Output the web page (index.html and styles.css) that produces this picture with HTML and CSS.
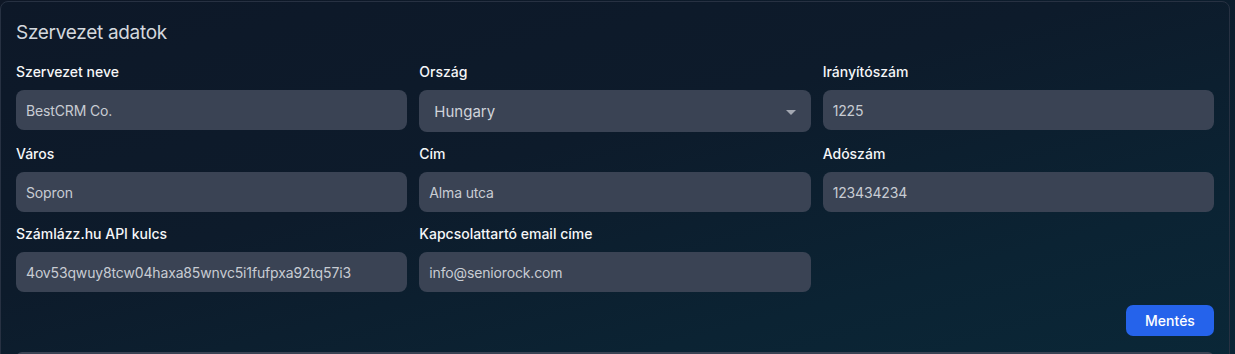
FILE: index.html
```html
<!DOCTYPE html>
<html lang="hu">
<head>
  <meta charset="UTF-8" />
  <meta name="viewport" content="width=device-width, initial-scale=1" />
  <title>Szervezet adatok</title>
  <link rel="stylesheet" href="styles.css">
</head>
<body>

  <section class="card">
    <h2 class="card-title">Szervezet adatok</h2>

    <form class="org-form" onsubmit="return false">
      <div class="field">
        <label for="orgName">Szervezet neve</label>
        <input id="orgName" type="text" value="BestCRM Co." />
      </div>
      <div class="field">
        <label for="country">Ország</label>
        <div class="select-wrap">
          <select id="country">
            <option>Hungary</option>
            <option>Austria</option>
            <option>Germany</option>
          </select>
          <svg class="caret" width="10" height="5" viewBox="0 0 10 5" aria-hidden="true">
            <path d="M0 0 H10 L5 5 Z" fill="#a3a8b2" />
          </svg>
        </div>
      </div>
      <div class="field">
        <label for="zip">Irányítószám</label>
        <input id="zip" type="text" value="1225" />
      </div>

      <div class="field">
        <label for="city">Város</label>
        <input id="city" type="text" value="Sopron" />
      </div>
      <div class="field">
        <label for="address">Cím</label>
        <input id="address" type="text" value="Alma utca" />
      </div>
      <div class="field">
        <label for="taxNo">Adószám</label>
        <input id="taxNo" type="text" value="123434234" />
      </div>

      <div class="field">
        <label for="apiKey">Számlázz.hu API kulcs</label>
        <input id="apiKey" type="text" value="4ov53qwuy8tcw04haxa85wnvc5i1fufpxa92tq57i3" />
      </div>
      <div class="field">
        <label for="email">Kapcsolattartó email címe</label>
        <input id="email" type="email" value="info@seniorock.com" />
      </div>
    </form>

    <div class="actions">
      <button type="button" class="btn-primary">Mentés</button>
    </div>

    <div class="next-block"></div>
  </section>

</body>
</html>
```

FILE: styles.css
```css
/* Reset */
* {
  box-sizing: border-box;
  margin: 0;
  padding: 0;
}
html, body {
  height: 100%;
}
body {
  font-family: 'Inter', 'Noto Sans', sans-serif;
  background: linear-gradient(160deg, #0e1726 0%, #0c1d2d 55%, #0a2636 100%);
  color: #f3f4f6;
  overflow: hidden;
  -webkit-font-smoothing: antialiased;
}

.card {
  width: 1230px;
  margin-top: 1px;
  padding: 15px 15px 0;
  border: 1px solid #273142;
  border-radius: 8px;
  background: linear-gradient(165deg, #0d1828 0%, #0d1b2b 40%, #0b2333 72%, #0a2838 100%);
  min-height: 400px;
}

.card-title {
  font-size: 19px;
  font-weight: 400;
  letter-spacing: -0.3px;
  line-height: 32px;
  color: #d4d8de;
  margin-bottom: 13px;
}

.org-form {
  display: grid;
  grid-template-columns: repeat(3, 1fr);
  column-gap: 12px;
  row-gap: 12px;
}

.field {
  display: flex;
  flex-direction: column;
  gap: 8px;
}
.field label {
  font-size: 14px;
  font-weight: 500;
  line-height: 20px;
  color: #f5f6f8;
}
.field input,
.field select {
  width: 100%;
  height: 40px;
  border: none;
  border-radius: 8px;
  background: #3a4354;
  color: #c8ccd3;
  font-family: inherit;
  font-size: 14px;
  letter-spacing: -0.15px;
  padding: 0 10px;
  outline: none;
}

.select-wrap {
  position: relative;
}
.field select {
  height: 42px;
  font-size: 15px;
  letter-spacing: 0;
  padding: 0 15px;
  color: #d0d4da;
  appearance: none;
  -webkit-appearance: none;
  cursor: pointer;
}
.caret {
  position: absolute;
  right: 15px;
  top: 20px;
  pointer-events: none;
}

.actions {
  display: flex;
  justify-content: flex-end;
  margin-top: 13px;
}
.btn-primary {
  width: 88px;
  height: 31px;
  border: none;
  border-radius: 7px;
  background: #2563eb;
  color: #fff;
  font-family: inherit;
  font-size: 14px;
  font-weight: 500;
  cursor: pointer;
}

.next-block {
  margin-top: 16px;
  height: 40px;
  background: #3a4354;
  border-radius: 6px 6px 0 0;
}
```
